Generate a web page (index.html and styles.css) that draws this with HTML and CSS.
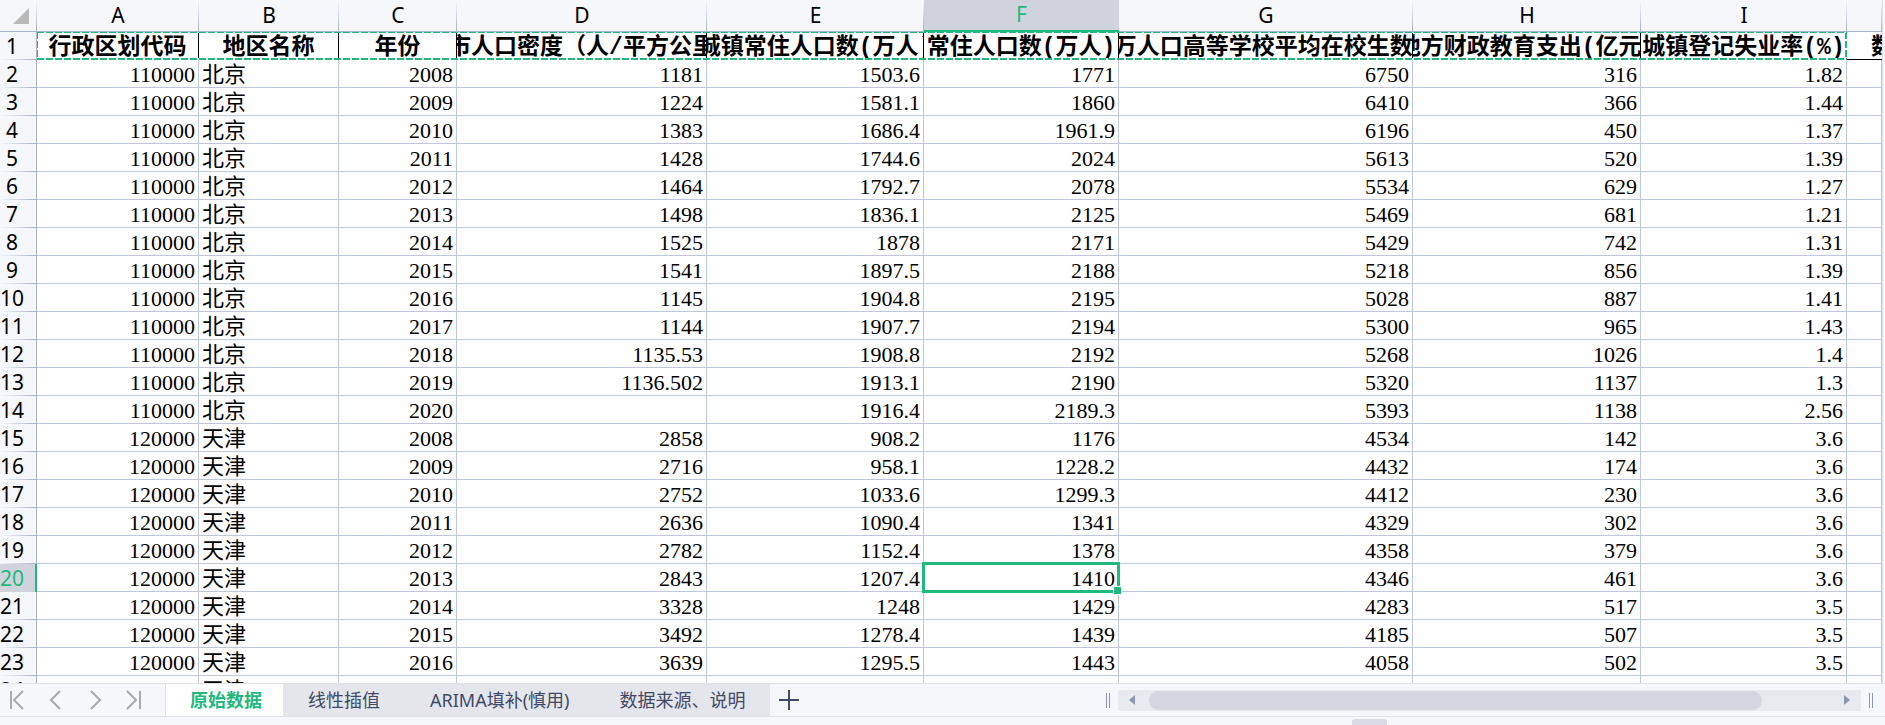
FILE: index.html
```html
<!DOCTYPE html>
<html lang="zh-CN">
<head>
<meta charset="utf-8">
<title>原始数据</title>
<link rel="stylesheet" href="styles.css">
</head>
<body>
<main class="sheet">
  <table class="grid">
    <colgroup>
      <col class="col-num"><col class="col-a"><col class="col-b"><col class="col-c"><col class="col-d"><col class="col-e"><col class="col-f"><col class="col-g"><col class="col-h"><col class="col-i"><col>
    </colgroup>
    <thead>
      <tr class="letters">
        <th class="corner"><svg width="16" height="16" viewBox="0 0 16 16" aria-hidden="true"><path d="M16 0V16H0Z" fill="#b9b9b9"/></svg></th>
        <th>A</th><th>B</th><th>C</th><th>D</th><th>E</th><th class="current">F</th><th>G</th><th>H</th><th>I</th><th></th>
      </tr>
    </thead>
    <tbody id="rows">
      <tr class="fields">
        <th class="num">1</th>
        <td><span>行政区划代码</span></td>
        <td><span>地区名称</span></td>
        <td><span>年份</span></td>
        <td><span>城市人口密度（人/平方公里）</span></td>
        <td><span>城镇常住人口数(万人)</span></td>
        <td><span>常住人口数(万人)</span></td>
        <td><span>每十万人口高等学校平均在校生数(人)</span></td>
        <td><span>地方财政教育支出(亿元)</span></td>
        <td><span>城镇登记失业率(%)</span></td>
        <td class="partial"><span>数</span></td>
      </tr>
    </tbody>
  </table>
  <div class="copied"></div>
</main>
<footer class="bar">
  <nav class="tabs">
    <div class="steps">
      <button aria-label="第一个"><svg width="16" height="20" viewBox="0 0 16 20"><path d="M2 1V19M14 1L5 10L14 19"/></svg></button>
      <button aria-label="上一个"><svg width="16" height="20" viewBox="0 0 16 20"><path d="M12 1L3 10L12 19"/></svg></button>
      <button aria-label="下一个"><svg width="16" height="20" viewBox="0 0 16 20"><path d="M4 1L13 10L4 19"/></svg></button>
      <button aria-label="最后一个"><svg width="16" height="20" viewBox="0 0 16 20"><path d="M14 1V19M1 1L10 10L1 19"/></svg></button>
    </div>
    <button class="tab active">原始数据</button>
    <button class="tab">线性插值</button>
    <button class="tab">ARIMA填补(慎用)</button>
    <button class="tab">数据来源、说明</button>
    <button class="add" aria-label="新建"><svg width="20" height="20" viewBox="0 0 20 20"><path d="M10 0V20M0 10H20"/></svg></button>
  </nav>
  <div class="scroller">
    <i class="grip"></i>
    <div class="track">
      <button aria-label="向左"><svg width="6" height="10" viewBox="0 0 6 10"><path d="M6 0V10L0 5Z"/></svg></button>
      <div class="lane"><div class="thumb"></div></div>
      <button aria-label="向右"><svg width="6" height="10" viewBox="0 0 6 10"><path d="M0 0V10L6 5Z"/></svg></button>
    </div>
    <i class="grip"></i>
  </div>
</footer>
<div class="under"><i class="handle"></i></div>
<script src="app.js"></script>
</body>
</html>
```
FILE: styles.css
```css
* { box-sizing: border-box; }

body {
  margin: 0;
  height: 100vh;
  display: flex;
  flex-direction: column;
  overflow: hidden;
  background: #f6f7fa;
  color: #000;
  font-family: "Noto Sans", "Noto Sans CJK SC", sans-serif;
}

button {
  margin: 0;
  padding: 0;
  border: 0;
  background: none;
  font: inherit;
  color: inherit;
}

svg { display: block; }

.sheet {
  position: relative;
  flex: 1;
  min-height: 0;
  margin-right: 2px;
  overflow: hidden;
  background: #fff;
  border-right: 1px solid #e0e3ea;
}

.grid {
  width: 100%;
  table-layout: fixed;
  border-collapse: separate;
  border-spacing: 0;
}

.col-num { width: 37px; }
.col-a { width: 162px; }
.col-b { width: 140px; }
.col-c { width: 118px; }
.col-d { width: 250px; }
.col-e { width: 217px; }
.col-f { width: 195px; }
.col-g { width: 294px; }
.col-h { width: 228px; }
.col-i { width: 206px; }

.letters th {
  height: 32px;
  padding: 0 0 2px;
  border-bottom: 1px solid #a9b2cc;
  background: linear-gradient(#f6f7fa, #a9b2cc) right / 1px 100% no-repeat #f6f7fa;
  font-size: 21px;
  font-weight: 400;
  line-height: 28px;
}

.letters .corner { padding: 8px 0 0 13px; vertical-align: top; }

.letters .current {
  background: #d0d3dc;
  border-bottom: 2px solid #1fb97d;
  color: #1fb97d;
}

.num {
  height: 28px;
  padding: 0 12px 0 0;
  border-right: 1px solid #a9b2cc;
  background: linear-gradient(to right, #f6f7fa, #a9b2cc) bottom / 100% 1px no-repeat #f6f7fa;
  font-size: 21px;
  font-weight: 400;
  line-height: 26px;
  white-space: nowrap;
}

.num.current {
  border-right: 2px solid #1fb97d;
  background: #d0d3dc;
  color: #1fb97d;
}

.grid td {
  height: 28px;
  padding: 3px 3px 0;
  border-right: 1px solid #c0c6dc;
  border-bottom: 1px solid #c0c6dc;
  font-family: "Liberation Serif", "Noto Sans CJK SC", serif;
  font-size: 22px;
  line-height: 24px;
  text-align: right;
  white-space: nowrap;
}

.grid td.place { text-align: left; }

.grid .fields td {
  padding: 0;
  border-color: #000;
  overflow: hidden;
  font-family: "Liberation Mono", "Noto Sans CJK SC", monospace;
  font-size: 23px;
  font-weight: 700;
  line-height: 32px;
}

.fields span {
  display: flex;
  justify-content: center;
  height: 27px;
}

.grid .fields .partial { border-right: 0; }
.partial span { justify-content: flex-start; padding-left: 24px; }

.grid .selected { position: relative; }

.selected::before {
  content: "";
  position: absolute;
  inset: -2px;
  border: 3px solid #1fb97d;
}

.selected::after {
  content: "";
  position: absolute;
  right: -4px;
  bottom: -4px;
  width: 7px;
  height: 7px;
  border: 1px solid #fff;
  background: #1fb97d;
}

/* dashed outline round the copied header row */
.copied {
  --across: repeating-linear-gradient(to right, #1fb97d 0 7px, #fff 7px 9px);
  --down: repeating-linear-gradient(#1fb97d 0 7px, #fff 7px 9px);
  position: absolute;
  left: 37px;
  top: 32px;
  width: 1810px;
  height: 28px;
  background:
    var(--across) top / 100% 1px no-repeat,
    var(--across) bottom / 100% 2px no-repeat,
    var(--down) left / 1px 100% no-repeat,
    var(--down) right / 2px 100% no-repeat;
}

.bar {
  display: flex;
  height: 34px;
  border-top: 1px solid #e0e3ea;
  border-bottom: 1px solid #e0e3ea;
}

.tabs { display: flex; flex: 1; }

.steps {
  display: flex;
  align-items: center;
  gap: 23px;
  width: 166px;
  padding-left: 9px;
  border-right: 1px solid #e0e3ea;
}

.steps path { fill: none; stroke: #a9a9a9; stroke-width: 2; }

.tab {
  padding: 0 25px;
  background: #e5e6ec;
  color: #3f4a66;
  font-size: 18px;
  line-height: 32px;
  white-space: nowrap;
}

.tab.active {
  padding: 0 21px 0 24px;
  background: #fff;
  color: #1fb97d;
  font-weight: 700;
}

.add { padding: 0 9px; }
.add path { fill: none; stroke: #3f4a66; stroke-width: 2; }

.scroller {
  display: flex;
  align-items: center;
  gap: 8px;
  width: 40.7%;
  margin-right: 12px;
}

.grip {
  width: 4px;
  height: 15px;
  border: solid #8a97b3;
  border-width: 0 1px;
}

.track {
  display: flex;
  align-items: center;
  flex: 1;
  height: 21px;
  padding: 0 11px;
  background: #e9eaf0;
}

.track path { fill: #8a97b3; }
.lane { flex: 1; padding: 0 82px 0 14px; }
.thumb { height: 19px; border-radius: 10px; background: #d5d7e0; }

.under { height: 8px; padding-top: 2px; }

.handle {
  display: block;
  width: 35px;
  height: 6px;
  margin-left: 71.7%;
  border-radius: 3px 3px 0 0;
  background: #d8dbe4;
}
```
FILE: app.js
```js
const records = [
  [110000, '北京', 2008, 1181, 1503.6, 1771, 6750, 316, 1.82],
  [110000, '北京', 2009, 1224, 1581.1, 1860, 6410, 366, 1.44],
  [110000, '北京', 2010, 1383, 1686.4, 1961.9, 6196, 450, 1.37],
  [110000, '北京', 2011, 1428, 1744.6, 2024, 5613, 520, 1.39],
  [110000, '北京', 2012, 1464, 1792.7, 2078, 5534, 629, 1.27],
  [110000, '北京', 2013, 1498, 1836.1, 2125, 5469, 681, 1.21],
  [110000, '北京', 2014, 1525, 1878, 2171, 5429, 742, 1.31],
  [110000, '北京', 2015, 1541, 1897.5, 2188, 5218, 856, 1.39],
  [110000, '北京', 2016, 1145, 1904.8, 2195, 5028, 887, 1.41],
  [110000, '北京', 2017, 1144, 1907.7, 2194, 5300, 965, 1.43],
  [110000, '北京', 2018, 1135.53, 1908.8, 2192, 5268, 1026, 1.4],
  [110000, '北京', 2019, 1136.502, 1913.1, 2190, 5320, 1137, 1.3],
  [110000, '北京', 2020, '', 1916.4, 2189.3, 5393, 1138, 2.56],
  [120000, '天津', 2008, 2858, 908.2, 1176, 4534, 142, 3.6],
  [120000, '天津', 2009, 2716, 958.1, 1228.2, 4432, 174, 3.6],
  [120000, '天津', 2010, 2752, 1033.6, 1299.3, 4412, 230, 3.6],
  [120000, '天津', 2011, 2636, 1090.4, 1341, 4329, 302, 3.6],
  [120000, '天津', 2012, 2782, 1152.4, 1378, 4358, 379, 3.6],
  [120000, '天津', 2013, 2843, 1207.4, 1410, 4346, 461, 3.6],
  [120000, '天津', 2014, 3328, 1248, 1429, 4283, 517, 3.5],
  [120000, '天津', 2015, 3492, 1278.4, 1439, 4185, 507, 3.5],
  [120000, '天津', 2016, 3639, 1295.5, 1443, 4058, 502, 3.5],
  ['', '天津', '', '', '', '', '', '', '']
];

const selected = { row: 20, column: 5 };
const body = document.getElementById('rows');

records.forEach((record, index) => {
  const number = index + 2;
  const row = body.insertRow();
  const label = document.createElement('th');
  label.className = number === selected.row ? 'num current' : 'num';
  label.textContent = number;
  row.append(label);
  record.forEach((value, column) => {
    const cell = row.insertCell();
    cell.textContent = value;
    if (column === 1) cell.className = 'place';
    if (number === selected.row && column === selected.column) cell.className = 'selected';
  });
  row.insertCell();
});
```
